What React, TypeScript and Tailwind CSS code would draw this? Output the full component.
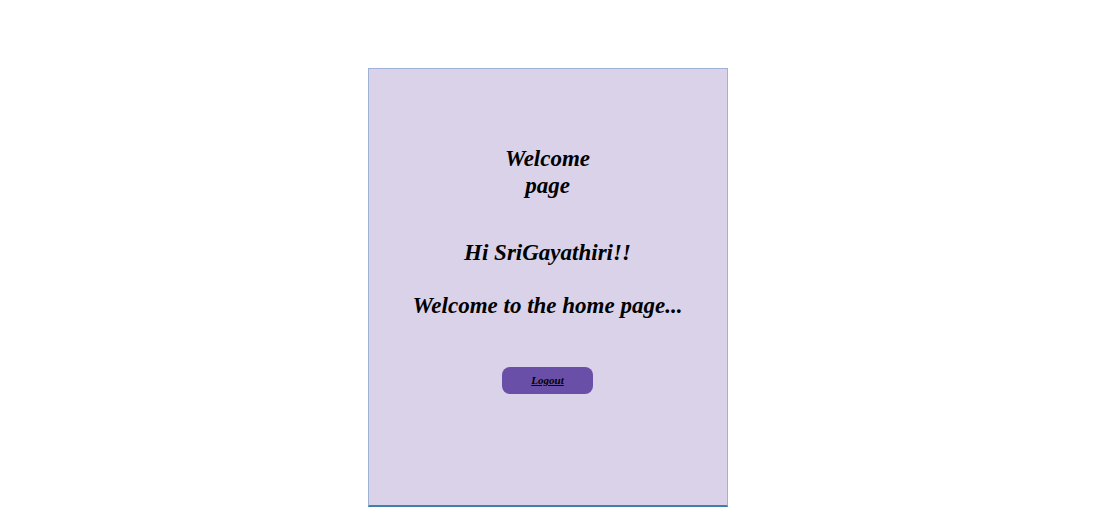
export default function App() {
  return (
    <div className="w-full min-h-[527px] bg-white flex justify-center pt-[68px] pl-[2px]" style={{ fontFamily: '"Liberation Serif", "Times New Roman", serif' }}>
      <div className="w-[360px] h-[439px] bg-[#dad2e9] border border-[#9db2d6] border-b-[#3f7fae] border-b-2 flex flex-col items-center pt-[77px]">
        <h2 className="w-[110px] text-center text-[23px] leading-[26.5px] font-bold italic text-black">Welcome page</h2>
        <h2 className="mt-[41px] text-center text-[23px] leading-[26.5px] font-bold italic text-black">Hi SriGayathiri!!</h2>
        <h2 className="mt-[26px] text-center text-[23px] leading-[26.5px] font-bold italic text-black">Welcome to the home page...</h2>
        <button className="mt-[48px] w-[91px] h-[27px] rounded-[8px] bg-[#6a4fa8] text-[11px] font-bold italic underline text-black">Logout</button>
      </div>
    </div>
  );
}
